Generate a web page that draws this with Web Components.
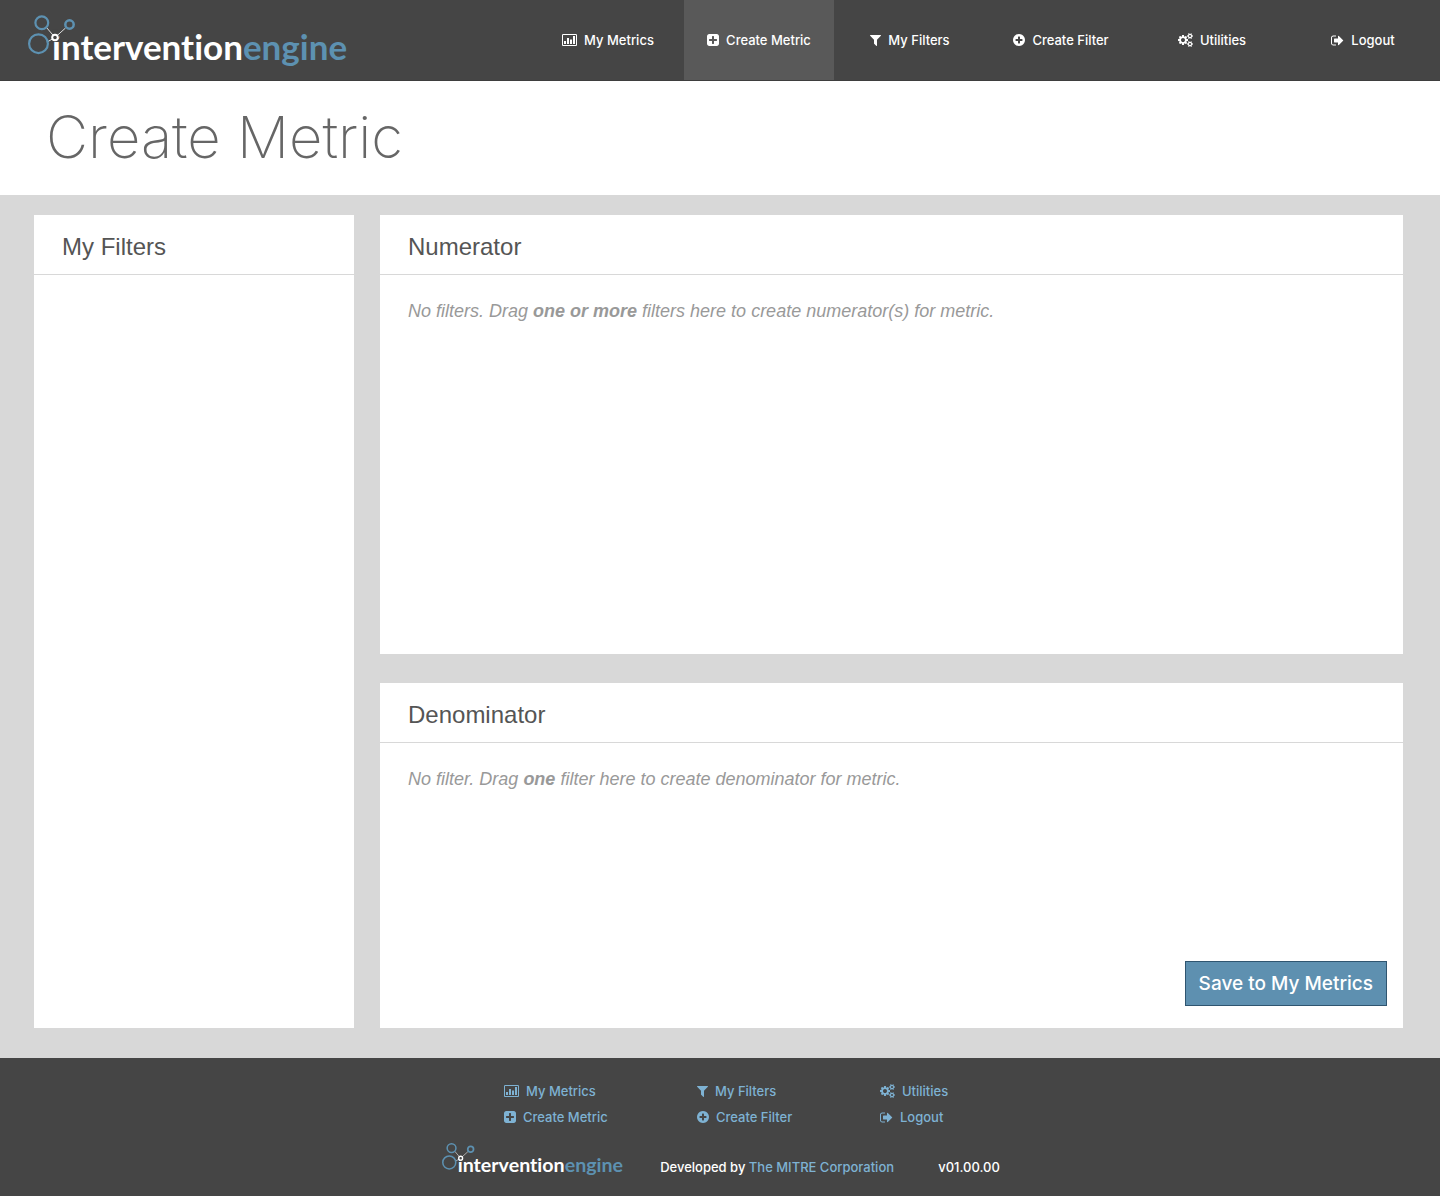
<!DOCTYPE html>
<html lang="en">
<head>
<meta charset="utf-8">
<title>Create Metric - interventionengine</title>
<style>
  body { margin: 0; background: #454545; font-family: "Liberation Sans", Arial, sans-serif; }
</style>
</head>
<body>
<ie-app></ie-app>
<script>
const ICONS = {
  chart: { w: 15, box: '0 0 1920 1536', h: 12, d: 'M160 0h1600q66 0 113 47t47 113v1216q0 66-47 113t-113 47h-1600q-66 0-113-47t-47-113v-1216q0-66 47-113t113-47zM160 128q-32 0-32 32v1216q0 32 32 32h1600q32 0 32-32v-1216q0-32-32-32zM256 896h256v384h-256zM640 512h256v768h-256zM1024 704h256v576h-256zM1408 256h256v1024h-256z' },
  plusSquare: { w: 12, box: '128 128 1536 1536', h: 12, d: 'M1408 960v-128q0-26-19-45t-45-19h-320v-320q0-26-19-45t-45-19h-128q-26 0-45 19t-19 45v320h-320q-26 0-45 19t-19 45v128q0 26 19 45t45 19h320v320q0 26 19 45t45 19h128q26 0 45-19t19-45v-320h320q26 0 45-19t19-45zm256-544v960q0 119-84.5 203.5t-203.5 84.5h-960q-119 0-203.5-84.5t-84.5-203.5v-960q0-119 84.5-203.5t203.5-84.5h960q119 0 203.5 84.5t84.5 203.5z' },
  filter: { w: 11, box: '192 256 1408 1408', h: 11, d: 'M1595 295q17 41-14 70l-493 493v742q0 42-39 59-13 5-25 5-27 0-45-19l-256-256q-19-19-19-45v-486l-493-493q-31-29-14-70 17-39 59-39h1280q42 0 59 39z' },
  plusCircle: { w: 12, box: '128 128 1536 1536', h: 12, d: 'M1344 960v-128q0-26-19-45t-45-19h-256v-256q0-26-19-45t-45-19h-128q-26 0-45 19t-19 45v256h-256q-26 0-45 19t-19 45v128q0 26 19 45t45 19h256v256q0 26 19 45t45 19h128q26 0 45-19t19-45v-256h256q26 0 45-19t19-45zm320-64q0 209-103 385.5t-279.5 279.5-385.5 103-385.5-103-279.5-279.5-103-385.5 103-385.5 279.5-279.5 385.5-103 385.5 103 279.5 279.5 103 385.5z' },
  cogs: { w: 15, box: '0 0 1920 1792', h: 14, d: 'M896 896q0-106-75-181t-181-75-181 75-75 181 75 181 181 75 181-75 75-181zm768 512q0-52-38-90t-90-38-90 38-38 90q0 53 37.5 90.5t90.5 37.5 90.5-37.5 37.5-90.5zm0-1024q0-52-38-90t-90-38-90 38-38 90q0 53 37.5 90.5t90.5 37.5 90.5-37.5 37.5-90.5zm-384 421v185q0 10-7 19.5t-16 10.5l-155 24q-11 35-32 76 34 48 90 115 7 11 7 20 0 12-7 19-23 30-82.5 89.5t-78.5 59.5q-11 0-21-7l-115-90q-37 19-77 31-11 108-23 155-7 24-30 24h-186q-11 0-20-7.5t-10-17.5l-23-153q-34-10-75-31l-118 89q-7 7-20 7-11 0-21-8-144-133-144-160 0-9 7-19 10-14 41-53t47-61q-23-44-35-82l-152-24q-10-1-17-9.5t-7-19.5v-185q0-10 7-19.5t16-10.5l155-24q11-35 32-76-34-48-90-115-7-11-7-20 0-12 7-20 22-30 82-89t79-59q11 0 21 7l115 90q34-18 77-32 11-108 23-154 7-24 30-24h186q11 0 20 7.5t10 17.5l23 153q34 10 75 31l118-89q8-7 20-7 11 0 21 8 144 133 144 160 0 8-7 19-12 16-42 54t-45 60q23 48 34 82l152 23q10 2 17 10.5t7 19.5zm640 533v140q0 16-149 31-12 27-30 52 51 113 51 138 0 4-4 7-122 71-124 71-8 0-46-47t-52-68q-20 2-30 2t-30-2q-14 21-52 68t-46 47q-2 0-124-71-4-3-4-7 0-25 51-138-18-25-30-52-149-15-149-31v-140q0-16 149-31 13-29 30-52-51-113-51-138 0-4 4-7 4-2 35-20t59-34 30-16q8 0 46 46.5t52 67.5q20-2 30-2t30 2q51-71 92-112l6-2q4 0 124 70 4 3 4 7 0 25-51 138 17 23 30 52 149 15 149 31zm0-1024v140q0 16-149 31-12 27-30 52 51 113 51 138 0 4-4 7-122 71-124 71-8 0-46-47t-52-68q-20 2-30 2t-30-2q-14 21-52 68t-46 47q-2 0-124-71-4-3-4-7 0-25 51-138-18-25-30-52-149-15-149-31v-140q0-16 149-31 13-29 30-52-51-113-51-138 0-4 4-7 4-2 35-20t59-34 30-16q8 0 46 46.5t52 67.5q20-2 30-2t30 2q51-71 92-112l6-2q4 0 124 70 4 3 4 7 0 25-51 138 17 23 30 52 149 15 149 31z' },
  signOut: { w: 13, box: '0 192 1664 1408', h: 11, d: 'M640 1440q0 4 1 20t.5 26.5-3 23.5-10 19.5-20.5 6.5h-320q-119 0-203.5-84.5t-84.5-203.5v-704q0-119 84.5-203.5t203.5-84.5h320q13 0 22.5 9.5t9.5 22.5q0 4 1 20t.5 26.5-3 23.5-10 19.5-20.5 6.5h-320q-66 0-113 47t-47 113v704q0 66 47 113t113 47h312l11.5 1 11.5 3 8 5.5 7 9 2 13.5zm928-544q0 26-19 45l-544 544q-19 19-45 19t-45-19-19-45v-288h-448q-26 0-45-19t-19-45v-384q0-26 19-45t45-19h448v-288q0-26 19-45t45-19 45 19l544 544q19 19 19 45z' }
};

function define(name, html) {
  customElements.define(name, class extends HTMLElement {
    constructor() {
      super();
      this.attachShadow({ mode: 'open' });
    }
    connectedCallback() {
      this.shadowRoot.innerHTML = typeof html === 'function' ? html(this) : html;
    }
  });
}

define('ie-icon', el => {
  const i = ICONS[el.getAttribute('name')];
  return `<style>:host { display: block; flex: none; } svg { display: block; fill: currentColor; }</style>
    <svg width="${i.w}" height="${i.h}" viewBox="${i.box}" aria-hidden="true"><path fill-rule="evenodd" d="${i.d}"/></svg>`;
});

/* The small variant draws the circles larger in relation to the wordmark. */
define('ie-logo', el => {
  const small = el.hasAttribute('small');
  return `
  <style>
    :host { display: block; flex: none; width: 326px; }
    :host([small]) { width: 184px; }
    svg { display: block; width: 100%; height: auto; }
    text { font: 700 35px Lato, sans-serif; font-variant-ligatures: none; }
  </style>
  <svg viewBox="${small ? '0 0 328 64' : '0 0 326 56'}" role="img" aria-label="interventionengine">
    <text x="${small ? 28 : 24}" y="${small ? 53 : 46}" fill="#fff">intervention<tspan fill="#5d91b1">engine</tspan></text>
    <g fill="none" ${small ? 'transform="scale(1.23)"' : ''}>
      <circle cx="27" cy="20.500" r="5" fill="#454545"/>
      <path d="M18.500 13.500L27 23.500L37.500 14M20 27.500L27 23.500" stroke="#ddd"/>
      <g stroke="#5d91b1">
        <circle cx="13.800" cy="8.800" r="6.400" stroke-width="2.200"/>
        <circle cx="41.500" cy="10.500" r="4.200" stroke-width="2.500"/>
        <circle cx="10.500" cy="29.700" r="9.400" stroke-width="2.200"/>
      </g>
      <circle cx="27" cy="23.500" r="2.800" fill="#454545" stroke="#fff" stroke-width="2"/>
    </g>
  </svg>`;
});

define('ie-link', el => `
  <style>
    :host { display: flex; }
    a { flex: 1; display: flex; align-items: center; justify-content: var(--link-justify, flex-start); gap: 7px;
        color: inherit; text-decoration: none; font: 500 13px/18px Inter, sans-serif; white-space: nowrap; }
    :host([active]) { background: #595959; }
  </style>
  <a href="#"${el.hasAttribute('active') ? ' aria-current="page"' : ''}><ie-icon name="${el.getAttribute('icon')}"></ie-icon><slot></slot></a>`);

define('ie-header', `
  <style>
    :host { display: flex; justify-content: space-between; background: #454545; color: #fff; height: 80px; border-bottom: 1px solid #3e3e3e; }
    ie-logo { margin: 14px 0 0 28px; }
    nav { display: flex; gap: 1px; padding-right: 2px; --link-justify: center; }
    ie-link { width: 150px; }
  </style>
  <ie-logo></ie-logo>
  <nav aria-label="Main">
    <ie-link icon="chart">My Metrics</ie-link>
    <ie-link icon="plusSquare" active>Create Metric</ie-link>
    <ie-link icon="filter">My Filters</ie-link>
    <ie-link icon="plusCircle">Create Filter</ie-link>
    <ie-link icon="cogs">Utilities</ie-link>
    <ie-link icon="signOut">Logout</ie-link>
  </nav>`);

define('ie-title', `
  <style>
    :host { display: block; background: #fff; padding: 16px 46px 18px; }
    h1 { margin: 0; font: 200 58px/80px Inter, sans-serif; color: #666; }
  </style>
  <h1><slot></slot></h1>`);

define('ie-panel', `
  <style>
    :host { display: flex; flex-direction: column; background: #fff; }
    h2 { margin: 0; padding: 18px 28px 13px; border-bottom: 1px solid #d8d8d8; font: 400 24px/28px "Liberation Sans", Arial, sans-serif; color: #555; }
    .body { flex: 1; display: flex; flex-direction: column; justify-content: space-between; padding: 24px 16px 22px 28px; font-size: 18px; line-height: 24px; color: #999; }
    ::slotted(p) { margin: 0; font-style: italic; }
    ::slotted(ie-button) { align-self: flex-end; }
  </style>
  <h2><slot name="title"></slot></h2>
  <div class="body"><slot></slot></div>`);

define('ie-button', `
  <style>
    :host { display: block; }
    button { display: block; margin: 0; padding: 10px 13px 9px; border: 1px solid #2f5570; background: #5e90b0; color: #fff; font: 500 19px/24px Inter, sans-serif; }
  </style>
  <button type="button"><slot></slot></button>`);

define('ie-footer', `
  <style>
    :host { display: flex; flex-direction: column; align-items: center; background: #454545; color: #7eb2d3; padding: 24px 0 18px; }
    nav { display: grid; grid-template-columns: 108px 98px 72px; gap: 85px; padding-left: 16px; }
    nav div { display: flex; flex-direction: column; gap: 8px; }
    .credits { display: grid; grid-template-columns: auto minmax(244px, auto) auto; align-items: center; gap: 34px; padding-left: 2px; margin-top: 16px; color: #fff; font: 500 13px/18px Inter, sans-serif; }
    p { margin: 0; padding-top: 14px; }
    a { color: #7eb2d3; text-decoration: none; }
  </style>
  <nav aria-label="Footer">
    <div><ie-link icon="chart">My Metrics</ie-link><ie-link icon="plusSquare">Create Metric</ie-link></div>
    <div><ie-link icon="filter">My Filters</ie-link><ie-link icon="plusCircle">Create Filter</ie-link></div>
    <div><ie-link icon="cogs">Utilities</ie-link><ie-link icon="signOut">Logout</ie-link></div>
  </nav>
  <div class="credits">
    <ie-logo small></ie-logo>
    <p>Developed by <a href="#">The MITRE Corporation</a></p>
    <p>v01.00.00</p>
  </div>`);

define('ie-app', `
  <style>
    :host { display: block; }
    main { display: flex; gap: 26px; padding: 20px 37px 30px 34px; background: #d8d8d8; }
    .filters { flex: none; width: 320px; }
    .metric { flex: 1; display: flex; flex-direction: column; gap: 29px; }
    .numerator { min-height: 439px; }
    .denominator { min-height: 345px; }
  </style>
  <ie-header></ie-header>
  <ie-title>Create Metric</ie-title>
  <main>
    <ie-panel class="filters"><span slot="title">My Filters</span></ie-panel>
    <div class="metric">
      <ie-panel class="numerator">
        <span slot="title">Numerator</span>
        <p>No filters. Drag <b>one or more</b> filters here to create numerator(s) for metric.</p>
      </ie-panel>
      <ie-panel class="denominator">
        <span slot="title">Denominator</span>
        <p>No filter. Drag <b>one</b> filter here to create denominator for metric.</p>
        <ie-button>Save to My Metrics</ie-button>
      </ie-panel>
    </div>
  </main>
  <ie-footer></ie-footer>`);
</script>
</body>
</html>
